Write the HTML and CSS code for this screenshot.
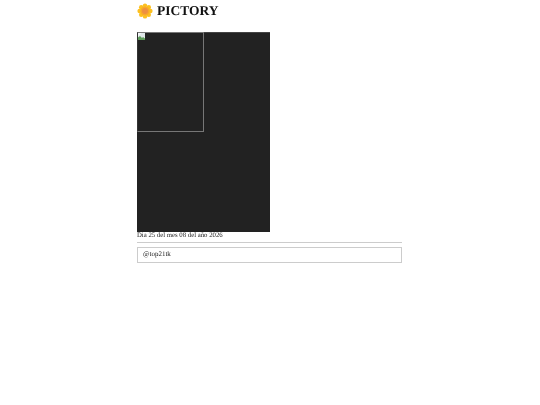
FILE: index.html
```html
<!DOCTYPE html>
<html lang="es">
<head>
    <meta charset="UTF-8">
    <meta name="viewport" content="width=device-width, initial-scale=1.0">
    <title>Pictory</title>
    <link rel="stylesheet" href="styles.css">
</head>
<body>

    <div class="container">
        <div class="brand">
            <svg class="logo" width="16" height="16" viewBox="0 0 16 16">
                <g fill="#fcc020">
                    <circle cx="8" cy="2.600" r="2.200"/>
                    <circle cx="8" cy="13.400" r="2.200"/>
                    <circle cx="2.600" cy="8" r="2.200"/>
                    <circle cx="13.400" cy="8" r="2.200"/>
                    <circle cx="4.200" cy="4.200" r="2.200"/>
                    <circle cx="11.800" cy="4.200" r="2.200"/>
                    <circle cx="4.200" cy="11.800" r="2.200"/>
                    <circle cx="11.800" cy="11.800" r="2.200"/>
                </g>
                <circle cx="8" cy="8" r="4.500" fill="#f8aa28"/>
                <circle cx="8" cy="8" r="3" fill="#ee9040"/>
            </svg>
            <h1>PICTORY</h1>
        </div>

        <div class="photo">
            <div class="thumb">
                <svg class="broken" width="7" height="7" viewBox="0 0 7 7">
                    <rect width="7" height="7" fill="#dfe6e8"/>
                    <path d="M0 7V4.500l2-1.500 2 2 1-1 2 1.500V7z" fill="#5d9c59"/>
                    <path d="M0 0h3.500L0 3.500z" fill="#f4f6f8"/>
                </svg>
            </div>
        </div>

        <div class="date">Dia 25 del mes 08 del año 2026</div>
        <hr class="rule">
        <div class="user">@top21tk</div>
    </div>

</body>
</html>
```

FILE: styles.css
```css
/* Basic reset */
* {
    margin: 0;
    padding: 0;
    box-sizing: border-box;
}

body {
    font-family: 'Liberation Serif', serif;
    background: #fff;
    color: #222;
    text-rendering: geometricPrecision;
}

.container {
    width: 265px;
    margin: 0 0 0 137px;
    will-change: transform; /* keeps text antialiasing grey */
}

/* Header */
.brand {
    display: flex;
    align-items: center;
    gap: 4px;
    height: 32px;
    padding-bottom: 10px;
}

.brand h1 {
    font-size: 13.500px;
    font-weight: bold;
    color: #111;
}

/* Photo */
.photo {
    width: 133px;
    height: 200px;
    background: #222;
    border-top: 1px solid #444;
}

.thumb {
    width: 67px;
    height: 100px;
    margin-top: -1px;
    border: 1px solid #777;
    border-left-color: #333;
}

.broken {
    display: block;
}

.date {
    font-size: 6.750px;
    line-height: 8px;
}

.rule {
    border: none;
    border-top: 1px solid #ccc;
    margin-top: 2px;
}

.user {
    margin-top: 4px;
    height: 16px;
    border: 1px solid #ccc;
    padding-left: 5px;
    font-size: 7px;
    line-height: 13px;
}
```
